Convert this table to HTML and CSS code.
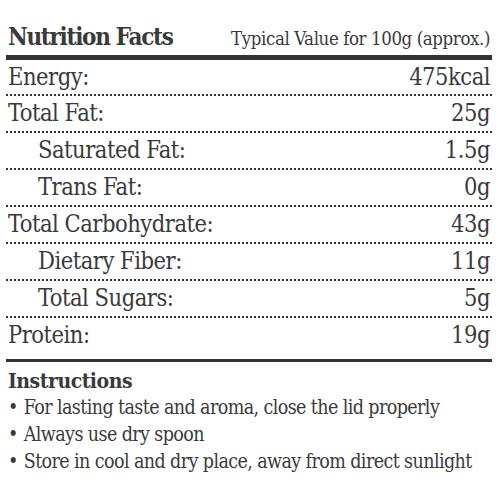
FILE: index.html
```html
<!DOCTYPE html>
<html>
<head>
<meta charset="utf-8">
<link rel="stylesheet" href="styles.css">
</head>
<body>
<div class="label">
  <div class="head">
    <h1 class="title">Nutrition Facts</h1>
    <span class="sub">Typical Value for 100g (approx.)</span>
  </div>
  <div class="rows">
    <div class="row"><span>Energy:</span><span>475kcal</span></div>
    <div class="row"><span>Total Fat:</span><span>25g</span></div>
    <div class="row sub-row"><span>Saturated Fat:</span><span>1.5g</span></div>
    <div class="row sub-row"><span>Trans Fat:</span><span>0g</span></div>
    <div class="row"><span>Total Carbohydrate:</span><span>43g</span></div>
    <div class="row sub-row"><span>Dietary Fiber:</span><span>11g</span></div>
    <div class="row sub-row"><span>Total Sugars:</span><span>5g</span></div>
    <div class="row last"><span>Protein:</span><span>19g</span></div>
  </div>
  <div class="instr">
    <h2 class="instr-title">Instructions</h2>
    <ul class="list">
      <li>For lasting taste and aroma, close the lid properly</li>
      <li>Always use dry spoon</li>
      <li>Store in cool and dry place, away from direct sunlight</li>
    </ul>
  </div>
</div>
</body>
</html>
```

FILE: styles.css
```css
html, body {
  margin: 0;
  padding: 0;
  background: #fff;
}
body {
  font-family: "DejaVu Serif", serif;
  font-stretch: condensed;
  color: #3a3a3a;
}
.label {
  width: 486px;
  margin-left: 6px;
}
.head {
  display: flex;
  justify-content: space-between;
  align-items: baseline;
  height: 60px;
  box-sizing: border-box;
  padding: 22px 2px 0 2px;
  border-bottom: 5px solid #333;
}
.title {
  margin: 0;
  font-size: 24px;
  font-weight: bold;
  line-height: 30px;
  letter-spacing: -1.3px;
}
.sub {
  font-size: 18.5px;
  letter-spacing: -0.4px;
}
.row {
  display: flex;
  justify-content: space-between;
  align-items: baseline;
  height: 37px;
  box-sizing: border-box;
  padding: 3px 2px 0 2px;
  border-bottom: 2px dotted #333;
  font-size: 23.5px;
  line-height: 28px;
  letter-spacing: -0.5px;
}
.row:first-child {
  height: 36px;
}
.sub-row span:first-child {
  padding-left: 30px;
}
.row.last {
  height: 44px;
  border-bottom: 3px solid #333;
}
.instr {
  padding: 6px 2px 0 2px;
}
.instr-title {
  margin: 0;
  font-size: 21px;
  font-weight: bold;
  line-height: 26px;
  letter-spacing: -0.5px;
}
.list {
  margin: 0;
  padding: 0;
  list-style: none;
  font-size: 19.5px;
  line-height: 27px;
  letter-spacing: -0.6px;
}
.list li::before {
  content: "\2022";
  margin-right: 6px;
}
```
